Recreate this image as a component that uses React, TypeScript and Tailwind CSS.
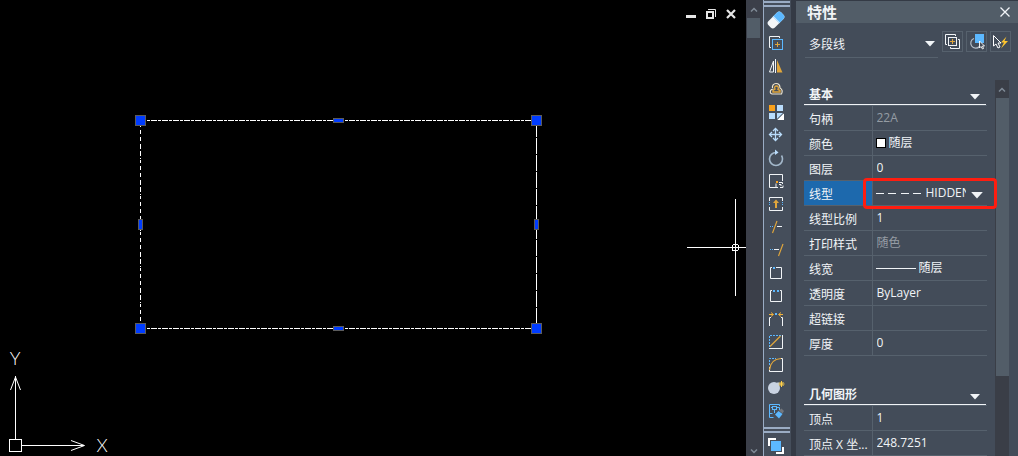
import { useState } from 'react';
import type { ReactNode } from 'react';

type Tool = {
    label: string;
    icon: ReactNode;
};

type PropertyRow = {
    id: string;
    label: string;
    value: string;
    kind?: 'text' | 'readonly' | 'color' | 'linetype' | 'lineweight';
};

const WHITE = '#f1f4f7';
const BLUE = '#5cb8ff';
const GOLD = '#e0a63c';
const PALE = '#b9dcfb';

// modify toolbar, top to bottom, every icon is drawn on a 20x20 grid
const tools: Tool[] = [
    {
        label: '删除',
        icon: (
            <g transform="rotate(-45 10 10)">
                <rect x="1" y="5.5" width="18" height="9" rx="3" fill="#f4f6f8" />
                <path d="M10 5.5h6a3 3 0 0 1 3 3v3a3 3 0 0 1-3 3h-6z" fill={BLUE} />
                <path d="M10.5 5.5v9" stroke="#d4ecff" />
            </g>
        ),
    },
    {
        label: '复制',
        icon: (
            <>
                <path d="M13.5 5V3.5h-10v11H5" stroke={WHITE} />
                <rect x="6.5" y="6.5" width="10" height="10" stroke={BLUE} />
                <path d="M11.5 9v5M9 11.5h5" stroke={GOLD} />
            </>
        ),
    },
    {
        label: '镜像',
        icon: (
            <>
                <path d="M7.5 5v11h-4z" stroke={WHITE} />
                <path d="M9.5 3v14" stroke={WHITE} />
                <path d="M11 4l5.5 12.5H11z" fill={GOLD} />
            </>
        ),
    },
    {
        label: '偏移',
        icon: (
            <>
                <path d="M6.5 9C6 6.5 7.5 4.5 10 4.5s4 2 4 4.5c2 1 3 3.5 1.5 6H6c-2-.5-2.5-3-.5-4.5l2-.5" stroke="#efe5d0" strokeWidth="1.2" />
                <path d="M9 10c-1-2 0-3 1.5-3S13 8.5 12 10.5l2 1V13H7v-1.500z" stroke={GOLD} strokeWidth="1.4" />
            </>
        ),
    },
    {
        label: '阵列',
        icon: (
            <>
                <rect x="3" y="3" width="6" height="6" fill="#f9a11b" />
                <rect x="11" y="3" width="6" height="6" fill={PALE} />
                <rect x="3" y="11" width="6" height="6" fill={PALE} />
                <rect x="11" y="11" width="6" height="6" fill={PALE} />
                <path d="M18 11v7h-7z" fill="#fff" />
                <path d="M11 17.5L17.5 11" stroke="#2a313b" />
            </>
        ),
    },
    {
        label: '移动',
        icon: (
            <>
                <path d="M9.5 4v11M4 9.5h11" stroke={PALE} strokeWidth="1.3" />
                <path d="M7 6l2.5-2.5L12 6M7 13l2.5 2.5L12 13M6 7L3.5 9.5 6 12M13 7l2.5 2.5L13 12" stroke={PALE} strokeWidth="1.3" />
            </>
        ),
    },
    {
        label: '旋转',
        icon: (
            <>
                <path d="M10 4.5a6.5 6.5 0 1 0 6.5 6.5c0-1.5-.4-2.5-1-3.5" stroke="#a3b8cb" strokeWidth="1.6" />
                <path d="M9 1.5L12.5 4.5 9 7" fill={PALE} />
            </>
        ),
    },
    {
        label: '缩放',
        icon: (
            <>
                <path d="M10 16.5H3.5v-13h13V10" stroke={WHITE} />
                <path d="M10 12.5v4h2M13 11.5h3.5V13M14 16.5h3v-2M13 13.5h2V15" stroke={WHITE} />
                <rect x="10" y="10" width="2" height="2" fill="#f9a11b" />
            </>
        ),
    },
    {
        label: '拉伸',
        icon: (
            <>
                <path d="M3.5 7V3.5h13V7M3.5 13v3.5h13V13" stroke={WHITE} />
                <path d="M3.5 8v1M3.5 10v1M16.5 8v1M16.5 10v1" stroke={BLUE} />
                <path d="M10 5.5L13 9h-2v5H9V9H7z" fill={GOLD} />
            </>
        ),
    },
    {
        label: '修剪',
        icon: (
            <>
                <path d="M4 9.5h1M6 9.5h1" stroke={BLUE} />
                <path d="M11 9.5h5" stroke={WHITE} />
                <path d="M6.5 16L11 4" stroke={GOLD} strokeWidth="1.2" />
            </>
        ),
    },
    {
        label: '延伸',
        icon: (
            <>
                <path d="M4 9.5h1M6 9.5h1" stroke={BLUE} />
                <path d="M8 9.5h5" stroke={WHITE} />
                <path d="M12.5 16L17 4" stroke={GOLD} strokeWidth="1.2" />
            </>
        ),
    },
    {
        label: '打断于点',
        icon: (
            <>
                <path d="M6 4.5H4.5v11h11v-11H10" stroke={WHITE} />
                <rect x="7" y="4" width="2" height="2" fill={BLUE} />
            </>
        ),
    },
    {
        label: '打断',
        icon: (
            <>
                <path d="M6 4.5H4.5v11h11v-11H14" stroke={WHITE} />
                <path d="M7 5h2M11 5h2" stroke={BLUE} strokeWidth="2" />
            </>
        ),
    },
    {
        label: '合并',
        icon: (
            <>
                <path d="M3.5 17V8.5H5M16.5 17V8.5H15" stroke={WHITE} />
                <path d="M3 5.5h4M17 5.5h-4M5 3.5l2.5 2L5 7.5M15 3.5l-2.5 2 2.5 2" stroke="#f0b13a" />
                <rect x="9" y="4" width="2" height="2" fill={BLUE} />
            </>
        ),
    },
    {
        label: '倒角',
        icon: (
            <>
                <path d="M3.5 15V3.5H15" stroke={BLUE} strokeDasharray="2 1" />
                <path d="M3 16.5h13.5V3" stroke={WHITE} />
                <path d="M4 14.5L14.5 4" stroke={GOLD} strokeWidth="1.2" />
            </>
        ),
    },
    {
        label: '圆角',
        icon: (
            <>
                <path d="M3.5 10V3.5H10" stroke={BLUE} strokeDasharray="2 1" />
                <path d="M3.5 12v4.5h13v-13H15" stroke={WHITE} />
                <path d="M3.5 15C4 8.5 8 4 15 3.5" stroke={GOLD} strokeWidth="1.2" />
            </>
        ),
    },
    {
        label: '分解',
        icon: (
            <>
                <circle cx="8" cy="10" r="6" fill="#c9d3e2" />
                <path d="M11 5l2 2" stroke="#c9d3e2" strokeWidth="3" />
                <path d="M15.5 3v6M12.5 6h6M13.5 4l4 4M17.5 4l-4 4" stroke="#ffd04a" />
            </>
        ),
    },
    {
        label: '编辑块',
        icon: (
            <>
                <path d="M3.5 16.5v-13h10V5M3.5 16.5h4M5 6.5h1.5M11 6.5h2.5V9M3.5 12.5h3M8.5 9v3" stroke={BLUE} />
                <rect x="6.5" y="5.5" width="4" height="3" stroke={BLUE} />
                <path d="M9 13.5l3.5-3.5 4 3-3.5 4.5z" fill={BLUE} />
                <path d="M13 9.5L15.5 7.5 18 10l-1.5 2.5z" fill="#73777d" />
            </>
        ),
    },
];

const basicRows: PropertyRow[] = [
    { id: 'handle', label: '句柄', value: '22A', kind: 'readonly' },
    { id: 'color', label: '颜色', value: '随层', kind: 'color' },
    { id: 'layer', label: '图层', value: '0' },
    { id: 'linetype', label: '线型', value: 'HIDDEN', kind: 'linetype' },
    { id: 'ltscale', label: '线型比例', value: '1' },
    { id: 'plotstyle', label: '打印样式', value: '随色', kind: 'readonly' },
    { id: 'lineweight', label: '线宽', value: '随层', kind: 'lineweight' },
    { id: 'transparency', label: '透明度', value: 'ByLayer' },
    { id: 'hyperlink', label: '超链接', value: '' },
    { id: 'thickness', label: '厚度', value: '0' },
];

const geometryRows: PropertyRow[] = [
    { id: 'vertex', label: '顶点', value: '1' },
    { id: 'vertexX', label: '顶点 X 坐...', value: '248.7251' },
];

function Chevron({ up = false }: { up?: boolean }) {
    return (
        <svg width="8" height="5" fill="none" stroke="#7f8a96" strokeWidth="1.5">
            <path d={up ? 'M1 4.5L4 1.5 7 4.5' : 'M1 .5L4 3.5 7 .5'} />
        </svg>
    );
}

function Triangle({ wide = false }: { wide?: boolean }) {
    return (
        <svg width={wide ? 12 : 10} height={wide ? 7 : 6} viewBox="0 0 10 6" className="shrink-0">
            <path d="M0 0h10L5 5.5z" fill="#f1f4f7" />
        </svg>
    );
}

function Grip() {
    return (
        <div className="flex flex-col gap-[2px]">
            <div className="h-[2px] bg-[#9aacc4]" />
            <div className="h-[2px] bg-[#9aacc4]" />
        </div>
    );
}

function DrawingArea() {
    return (
        <main className="relative min-w-0 flex-1 overflow-hidden bg-black">
            <svg className="absolute inset-0 h-full w-full" fill="none" stroke="#fff" shapeRendering="crispEdges">
                <path d="M140 120.5H537" strokeDasharray="6 1 3 1" />
                <path d="M140 328.5H537" strokeDasharray="6 1 3 1" />
                <path d="M140.5 121V329" strokeDasharray="4 3 4 3 5 2 5 2 1 1 3 3" strokeDashoffset="27" />
                <path d="M536.5 121V329" strokeDasharray="16 1" />
                <g fill="#003cff" stroke="#5b5b5b">
                    <rect x="135.5" y="115.5" width="10" height="10" />
                    <rect x="531.5" y="115.5" width="10" height="10" />
                    <rect x="135.5" y="323.5" width="10" height="10" />
                    <rect x="531.5" y="323.5" width="10" height="10" />
                    <rect x="333.5" y="118.5" width="10" height="4" />
                    <rect x="333.5" y="326.5" width="10" height="4" />
                    <rect x="138.5" y="219.5" width="4" height="10" />
                    <rect x="534.5" y="219.5" width="4" height="10" />
                </g>
                {/* 十字光标 */}
                <path d="M735.5 199v97M687 247.5h59" />
                <circle cx="735.5" cy="247.5" r="3.5" />
            </svg>
            {/* UCS 图标 */}
            <svg className="absolute bottom-0 left-0" width="120" height="110" fill="none" stroke="#fff">
                <path d="M9.5 93.5h12v12h-12zM15.5 93V30M22 99.5h62" shapeRendering="crispEdges" />
                <path d="M10.5 44l5-13 5 13M71 94.5l13.5 5-13.5 5" />
                <text x="15" y="19" textAnchor="middle" fill="#fff" stroke="none" className="font-['Lato',sans-serif] text-[18px] font-light">Y</text>
                <text x="102" y="106" textAnchor="middle" fill="#fff" stroke="none" className="font-['Lato',sans-serif] text-[18px] font-light">X</text>
            </svg>
            <div className="absolute top-[8px] right-[9px] flex gap-[8px]">
                <button type="button" aria-label="最小化">
                    <svg width="12" height="12"><path d="M1 7h10v3H1z" fill="#e6e6e6" /></svg>
                </button>
                <button type="button" aria-label="还原">
                    <svg width="12" height="12" fill="none" stroke="#e6e6e6">
                        <path d="M3 1.5h7.5V9" />
                        <path d="M2 4h6v6H2z" strokeWidth="2" />
                    </svg>
                </button>
                <button type="button" aria-label="关闭">
                    <svg width="12" height="12" fill="none" stroke="#e6e6e6" strokeWidth="2.2">
                        <path d="M2 2l8 8M10 2l-8 8" />
                    </svg>
                </button>
            </div>
        </main>
    );
}

function Toolbar() {
    return (
        <nav className="flex w-7 shrink-0 flex-col overflow-hidden border-l border-[#9aacc4] bg-[#454e5b] pt-px pr-px">
            <Grip />
            <div className="flex flex-col pt-px">
                {tools.map((tool) => (
                    <button key={tool.label} type="button" aria-label={tool.label} className="flex h-[23px] items-center pl-[2px]">
                        <svg width="20" height="20" viewBox="0 0 20 20" fill="none">{tool.icon}</svg>
                    </button>
                ))}
            </div>
            <div className="pt-[5px]">
                <Grip />
            </div>
            <button type="button" aria-label="绘图次序" className="flex shrink-0 pt-[3px] pl-[2px]">
                <svg width="20" height="20" viewBox="0 0 20 20" fill="none">
                    <path d="M3 10V3h7M17 11v6h-7" stroke="#fff" strokeWidth="2" />
                    <rect x="5" y="5" width="10" height="10" fill={BLUE} />
                </svg>
            </button>
        </nav>
    );
}

function PropertyValue({ row }: { row: PropertyRow }) {
    const [value, setValue] = useState(row.value);

    if (row.kind === 'linetype') {
        return (
            <div className="relative flex items-center gap-1">
                <svg width="46" height="1" className="shrink-0">
                    <path d="M0 .5h45" stroke="#f1f4f7" strokeDasharray="8 4 8 5 8 4 8 9" />
                </svg>
                <select id={row.id} value={value} onChange={(e) => setValue(e.target.value)} className="w-10 appearance-none overflow-hidden text-clip outline-none">
                    <option>HIDDEN</option>
                    <option>Continuous</option>
                </select>
                <div className="pointer-events-none pt-[4px] pl-px">
                    <Triangle wide />
                </div>
                {/* 红色标注框 */}
                <div className="pointer-events-none absolute -top-[7px] -left-[13px] z-10 h-[31px] w-[134px] rounded-[4px] border-3 border-[#ff1d10]" />
            </div>
        );
    }
    if (row.kind === 'color') {
        return (
            <button id={row.id} type="button" className="flex items-center gap-[3px]">
                <span className="h-[10px] w-[10px] border border-black bg-white" />
                {value}
            </button>
        );
    }
    if (row.kind === 'lineweight') {
        return (
            <button id={row.id} type="button" className="flex items-center gap-[3px]">
                <span className="h-px w-10 bg-[#f1f4f7]" />
                {value}
            </button>
        );
    }
    return (
        <input
            id={row.id}
            type="text"
            value={value}
            readOnly={row.kind === 'readonly'}
            onChange={(e) => setValue(e.target.value)}
            className={`block w-full pl-px outline-none ${row.kind === 'readonly' ? 'text-[#959ca4]' : ''}`}
        />
    );
}

function PropertySection({ title, rows, selected, onSelect }: {
    title: string;
    rows: PropertyRow[];
    selected: string;
    onSelect: (id: string) => void;
}) {
    const [open, setOpen] = useState(true);

    return (
        <section>
            <button
                type="button"
                onClick={() => setOpen(!open)}
                className="flex h-[25px] w-[182px] items-center justify-between border-b border-[#f1f4f7] pt-[5px] pr-[6px] pl-[5px] font-bold"
            >
                {title}
                <span className="pt-[4px]"><Triangle /></span>
            </button>
            {open && (
                <table className="w-full table-fixed border-collapse">
                    <tbody>
                        {rows.map((row) => (
                            <tr key={row.id} onClick={() => onSelect(row.id)} className="h-[25px] border-y border-[#56616d]">
                                <th className={`w-[68px] border-r border-[#56616d] p-0 pt-[4px] pl-[5px] text-left font-normal whitespace-nowrap ${selected === row.id ? 'bg-[#1d69ad]' : ''}`}>
                                    <label htmlFor={row.id} className="block leading-4">{row.label}</label>
                                </th>
                                <td className="p-0 pl-[3px] leading-4">
                                    <PropertyValue row={row} />
                                </td>
                            </tr>
                        ))}
                    </tbody>
                </table>
            )}
        </section>
    );
}

function PropertiesPanel() {
    const [selected, setSelected] = useState('linetype');

    return (
        <aside className="flex w-[222px] shrink-0 flex-col overflow-hidden border-t border-[#343a45] bg-[#434c59] text-[#f1f4f7]">
            <header className="flex h-[22px] shrink-0 items-center justify-between bg-[#525d68] pr-2 pl-[11px]">
                <h1 className="text-[15px] leading-5 font-bold">特性</h1>
                <button type="button" aria-label="关闭特性">
                    <svg width="10" height="10" fill="none" stroke="#f1f4f7" strokeWidth="1.3">
                        <path d="M.5 .5l9 9M9.5 .5l-9 9" />
                    </svg>
                </button>
            </header>

            <div className="flex h-[57px] shrink-0 items-start gap-[3px] pt-2 pl-[9px]">
                <div className="relative mr-px w-[133px]">
                    <select aria-label="对象类型" className="block h-[27px] w-full appearance-none border-b border-[#56616d] pt-px pl-1 outline-none">
                        <option>多段线</option>
                    </select>
                    <div className="pointer-events-none absolute top-[10px] right-[3px]">
                        <Triangle />
                    </div>
                </div>
                <button type="button" aria-label="切换 PICKADD" className="border border-[#56616d]">
                    <svg width="19" height="19" viewBox="1 1 19 19" fill="none">
                        <path d="M13.5 5V3.5h-10v10H5M16 8.5h1.5v9h-9V16" stroke={WHITE} />
                        <rect x="6.5" y="6.5" width="8" height="8" stroke={WHITE} />
                        <path d="M10.5 8v5M8 10.5h5" stroke={GOLD} />
                    </svg>
                </button>
                <button type="button" aria-label="选择对象" className="border border-[#56616d]">
                    <svg width="19" height="19" viewBox="1 1 19 19" fill="none">
                        <path d="M8 7.5a5 5 0 1 0 5.5 8" stroke="#b5bec8" strokeWidth="1.2" />
                        <rect x="9" y="3" width="9" height="9" fill={BLUE} />
                        <path d="M13.5 10v7l1.5-1.5 1.5 2.5 1-.5-1-2.5h2z" fill="#434c59" stroke="#fff" strokeWidth=".9" />
                    </svg>
                </button>
                <button type="button" aria-label="快速选择" className="border border-[#56616d]">
                    <svg width="19" height="19" viewBox="1 1 19 19" fill="none">
                        <path d="M3.5 4.5V15L6 13l2 4 2-1-2-4h3z" stroke="#fff" />
                        <path d="M16.5 5.5l-5.5 6h3l-3 6 7-7.5h-3.5z" fill="#ffc62e" />
                    </svg>
                </button>
            </div>

            <div className="flex min-h-0 flex-1 gap-2 pr-[9px] pl-2">
                <div className="flex min-w-0 flex-1 flex-col gap-[24px]">
                    <PropertySection title="基本" rows={basicRows} selected={selected} onSelect={setSelected} />
                    <PropertySection title="几何图形" rows={geometryRows} selected={selected} onSelect={setSelected} />
                </div>
                <div className="flex w-[14px] shrink-0 flex-col bg-[#3a3e47]">
                    <button type="button" aria-label="向上滚动" className="flex h-[18px] items-center justify-center">
                        <Chevron up />
                    </button>
                    <div className="ml-px h-[278px] bg-[#525d68]" />
                </div>
            </div>
        </aside>
    );
}

export default function App() {
    return (
        <div className="flex h-screen w-full overflow-hidden bg-[#343a45] font-['Open_Sans','Noto_Sans_CJK_SC',sans-serif] text-xs">
            <DrawingArea />
            <div className="flex w-[17px] shrink-0 flex-col bg-[#3b3f49] pr-[2px]">
                <button type="button" aria-label="向上滚动" className="flex h-[18px] items-center justify-center pt-px">
                    <Chevron up />
                </button>
                <div className="mx-px h-5 bg-[#525d68]" />
                <button type="button" aria-label="向下滚动" className="mt-auto flex h-[10px] items-center justify-center">
                    <Chevron />
                </button>
            </div>
            <Toolbar />
            <div className="w-[5px] shrink-0" />
            <PropertiesPanel />
        </div>
    );
}
